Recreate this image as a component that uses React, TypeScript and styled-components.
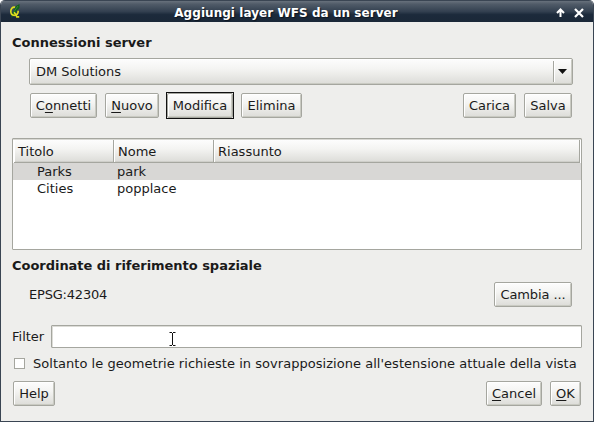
import React from "react";
import styled, { createGlobalStyle, css } from "styled-components";

const GlobalStyle = createGlobalStyle`
  html, body { margin: 0; padding: 0; background: #fff; }
  *, *::before, *::after { box-sizing: border-box; }
`;

const Window = styled.div`
  position: relative;
  width: 594px;
  height: 422px;
  display: flex;
  flex-direction: column;
  overflow: hidden;
  background: #eeeeec;
  border: 1px solid #3a4553;
  border-top: 0;
  border-radius: 5px 5px 0 0;
  color: #1a1a1a;
  font: 13px/17px "DejaVu Sans", sans-serif;
  white-space: nowrap;
`;

const TitleBar = styled.header`
  flex: none;
  height: 22px;
  display: flex;
  align-items: center;
  padding: 0 9px 0 8px;
  border-top: 1px solid #3a4553;
  background: linear-gradient(#68717c 0, #505b68 15%, #334050 50%, #1c2a3b 65%, #1b2838 100%);
`;

const TitleText = styled.h1`
  flex: 1;
  margin: 4px 0 0;
  padding-right: 5px;
  color: #fff;
  font: bold 12px/17px "DejaVu Sans", sans-serif;
  letter-spacing: 0.05px;
  text-align: center;
  text-shadow: 1px 1px 1px #0d1520;
`;

const TitleIcons = styled.div`
  display: flex;
  gap: 9px;
  margin-top: 2px;
`;

const Content = styled.main`
  display: flex;
  flex-direction: column;
  padding: 12px 11px 0;
`;

const Heading = styled.h2<{ $gap: number; $spacing?: number }>`
  margin: 0 0 ${(p) => p.$gap}px;
  font: bold 13px/17px "DejaVu Sans", sans-serif;
  letter-spacing: ${(p) => p.$spacing ?? 0}px;
`;

const Text = styled.span<{ $spacing: number }>`
  letter-spacing: ${(p) => p.$spacing}px;
`;

const raised = css`
  border: 1px solid #a5a69f;
  border-radius: 2px;
  background: linear-gradient(#fdfdfd, #f4f4f2 40%, #dcdcd8);
  box-shadow: inset 1px 1px 0 #fff, inset -1px -1px 0 #c9cac2;
`;

const Combo = styled.div`
  ${raised}
  height: 27px;
  margin: 0 9px 8px 17px;
  padding-left: 6px;
  display: flex;
  align-items: center;
`;

const ComboValue = styled.span`
  flex: 1;
`;

const ComboArrow = styled.span`
  width: 19px;
  height: 21px;
  padding-right: 1px;
  display: flex;
  align-items: center;
  justify-content: center;
  border-left: 1px solid #a5a69f;
  box-shadow: inset 1px 0 0 #fff;
`;

const ButtonRow = styled.div<{ $margin: string }>`
  display: flex;
  align-items: center;
  margin: ${(p) => p.$margin};
`;

const Spacer = styled.span`
  flex: 1;
`;

const Button = styled.button<{ $w: number; $after?: number; $default?: boolean }>`
  ${raised}
  position: relative;
  flex: none;
  width: ${(p) => p.$w}px;
  height: 25px;
  margin: 0 ${(p) => p.$after ?? 0}px 0 0;
  padding: 0;
  color: inherit;
  font: inherit;
  ${(p) =>
    p.$default &&
    css`
      &::after {
        content: "";
        position: absolute;
        inset: -2px;
        border: 1px solid #111;
      }
    `}
`;

const Mnemonic = styled.span`
  text-decoration: underline;
  text-decoration-thickness: 1px;
  text-underline-offset: 2px;
  text-decoration-skip-ink: none;
`;

const Tree = styled.div`
  height: 112px;
  margin-bottom: 7px;
  padding: 1px;
  border: 1px solid #a5a69f;
  border-radius: 1px;
  background: #fff;
  box-shadow: inset 0 1px 0 #d8d8d3;
`;

const columns = css`
  display: grid;
  grid-template-columns: 100px 100px 1fr;
`;

const TreeHeader = styled.div`
  ${columns}
  height: 23px;
`;

const HeaderCell = styled.div`
  padding: 3px 0 0 4px;
  border-right: 1px solid #a5a69f;
  border-bottom: 1px solid #a5a69f;
  background: linear-gradient(#fdfdfd, #f4f4f2 40%, #dcdcd8);
  box-shadow: inset 1px 0 0 #fff, inset 0 -1px 0 #cfcfca;
`;

const TreeRow = styled.div<{ $selected?: boolean }>`
  ${columns}
  height: 17px;
  margin: 0 -1px;
  background: ${(p) => (p.$selected ? "#d8d7d5" : "#fff")};
`;

const TreeCell = styled.span<{ $indent: number }>`
  padding-left: ${(p) => p.$indent}px;
`;

const FilterRow = styled.label`
  display: flex;
  align-items: center;
  gap: 7px;
  height: 23px;
`;

const FilterLabel = styled.span`
  width: 32px;
`;

const FilterInput = styled.input`
  flex: 1;
  min-width: 0;
  height: 23px;
  padding: 0 4px;
  border: 1px solid #a5a69f;
  border-radius: 1px;
  background: #fff;
  box-shadow: inset 1px 1px 0 #dcdcd7;
  font: inherit;
`;

const CheckRow = styled.label`
  display: flex;
  align-items: center;
  gap: 8px;
  height: 17px;
  margin: 7px 0 9px 2px;
`;

const CheckBox = styled.span`
  flex: none;
  width: 11px;
  height: 11px;
  border: 1px solid #a5a69f;
  background: #fff;
`;

const Pointer = styled.svg`
  position: absolute;
  left: 167px;
  top: 332px;
`;

const QgisIcon = () => (
  <svg width="12" height="15" viewBox="0 0 12 15">
    <path d="M10.5 0v4L8 6.5 4.5 12 2 14l1.2-4L5 6 7 2z" fill="#12601c" />
    <path d="M6 3.2C3.5 2.6 1.8 4.8 1.8 7.3c0 2.6 1.3 4 3.4 4 2.4 0 4-2 4-4.6" fill="none" stroke="#dedc1e" strokeWidth="1.7" />
    <path d="M5 8.2l1.8 2.3 1 2.3h2.4" fill="none" stroke="#dedc1e" strokeWidth="1.7" />
    <path d="M9 2L4 9" stroke="#2f8a2b" strokeWidth="1" />
  </svg>
);

const App = () => (
  <>
    <GlobalStyle />
    <Window>
      <TitleBar>
        <QgisIcon />
        <TitleText>Aggiungi layer WFS da un server</TitleText>
        <TitleIcons>
          <svg width="9" height="10" viewBox="0 0 9 10" fill="none" stroke="#fff" strokeWidth="2">
            <path d="M4.5 9V2M1 5l3.5-3.5L8 5" />
          </svg>
          <svg width="10" height="10" viewBox="0 0 10 10" fill="none" stroke="#fff" strokeWidth="2.2">
            <path d="M1 1l8 8M9 1L1 9" />
          </svg>
        </TitleIcons>
      </TitleBar>

      <Content>
        <Heading $gap={7}>Connessioni server</Heading>
        <Combo>
          <ComboValue>DM Solutions</ComboValue>
          <ComboArrow>
            <svg width="9" height="5" viewBox="0 0 9 5">
              <path d="M0 0h9L4.5 5z" fill="#111" />
            </svg>
          </ComboArrow>
        </Combo>
        <ButtonRow $margin="0 10px 20px 18px">
          <Button $w={67} $after={8}>C<Mnemonic>o</Mnemonic>nnetti</Button>
          <Button $w={54} $after={8}><Mnemonic>N</Mnemonic>uovo</Button>
          <Button $w={66} $after={8} $default>Modifica</Button>
          <Button $w={61}>Elimina</Button>
          <Spacer />
          <Button $w={53} $after={8}>Carica</Button>
          <Button $w={48}>Salva</Button>
        </ButtonRow>

        <Tree>
          <TreeHeader>
            <HeaderCell>Titolo</HeaderCell>
            <HeaderCell>Nome</HeaderCell>
            <HeaderCell>Riassunto</HeaderCell>
          </TreeHeader>
          <TreeRow $selected>
            <TreeCell $indent={24}>Parks</TreeCell>
            <TreeCell $indent={4}>park</TreeCell>
          </TreeRow>
          <TreeRow>
            <TreeCell $indent={24}>Cities</TreeCell>
            <TreeCell $indent={4}>popplace</TreeCell>
          </TreeRow>
        </Tree>

        <Heading $gap={8} $spacing={-0.03}>Coordinate di riferimento spaziale</Heading>
        <ButtonRow $margin="0 10px 18px 17px">
          <Text $spacing={-0.2}>EPSG:42304</Text>
          <Spacer />
          <Button $w={78}><Text $spacing={-0.1}>Cambia ...</Text></Button>
        </ButtonRow>

        <FilterRow>
          <FilterLabel>Filter</FilterLabel>
          <FilterInput />
        </FilterRow>
        <CheckRow>
          <CheckBox />
          <Text $spacing={0.035}>Soltanto le geometrie richieste in sovrapposizione all'estensione attuale della vista</Text>
        </CheckRow>
        <ButtonRow $margin="0 1px 0 1px">
          <Button $w={42}>Help</Button>
          <Spacer />
          <Button $w={56} $after={8}><Mnemonic>C</Mnemonic>ancel</Button>
          <Button $w={31}><Mnemonic>O</Mnemonic>K</Button>
        </ButtonRow>
      </Content>

      <Pointer width="10" height="15" viewBox="0 0 10 15" fill="none" stroke="#111">
        <path d="M1.5 .5H4M5 .5H7.5M4.5 1v12M1.5 13.5H4M5 13.5H7.5" />
      </Pointer>
    </Window>
  </>
);

export default App;
